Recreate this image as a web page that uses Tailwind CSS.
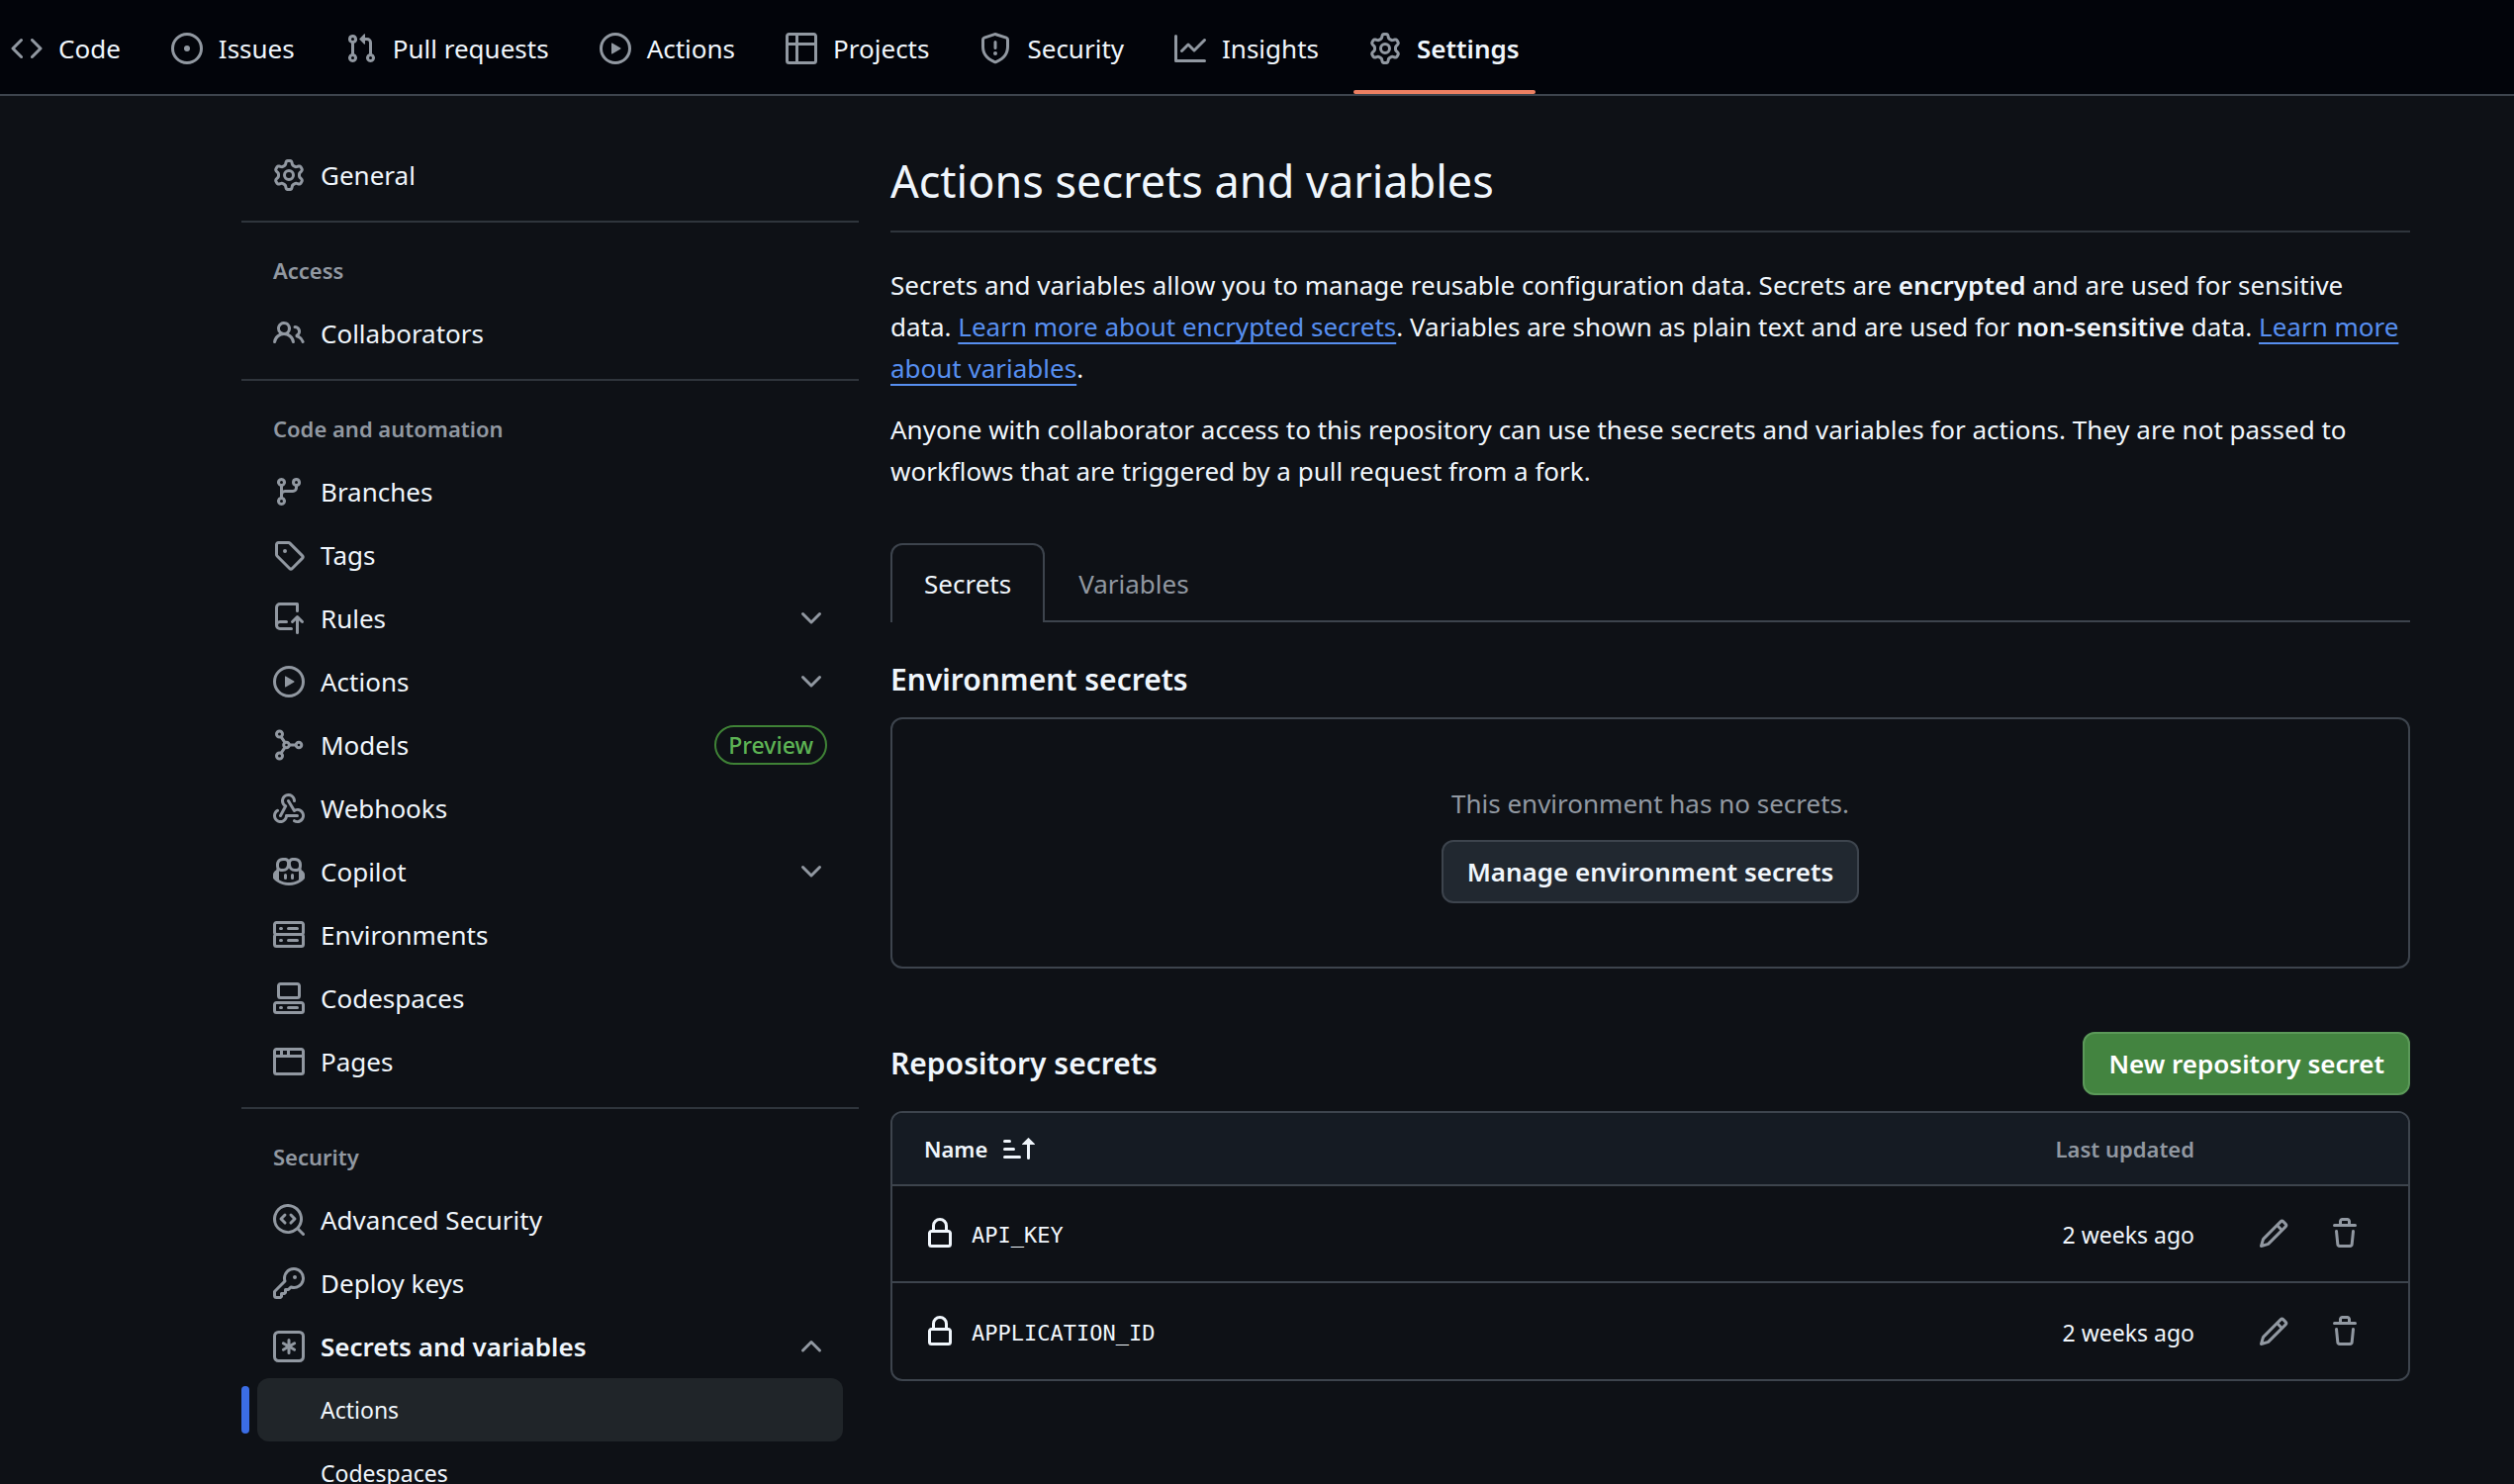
<!DOCTYPE html>
<html lang="en">
<head>
    <meta charset="UTF-8">
    <meta name="viewport" content="width=device-width, initial-scale=1.0">
    <title>Actions secrets and variables</title>
    <script src="https://cdn.jsdelivr.net/npm/@tailwindcss/browser@4"></script>
</head>
<body class="bg-[#0e1116] text-[#f0f6fc] text-[26px] leading-[42px] font-['Noto_Sans','Open_Sans',sans-serif]">
    <!-- Icon set -->
    <svg class="hidden" aria-hidden="true">
        <symbol id="code" viewBox="0 0 16 16"><path d="m11.28 3.22 4.25 4.25a.75.75 0 0 1 0 1.06l-4.25 4.25a.749.749 0 0 1-1.275-.326.749.749 0 0 1 .215-.734L13.94 8l-3.72-3.72a.749.749 0 0 1 .326-1.275.749.749 0 0 1 .734.215Zm-6.56 0a.751.751 0 0 1 1.042.018.751.751 0 0 1 .018 1.042L2.06 8l3.72 3.72a.749.749 0 0 1-.326 1.275.749.749 0 0 1-.734-.215L.47 8.53a.75.75 0 0 1 0-1.06Z"/></symbol>
        <symbol id="issue" viewBox="0 0 16 16"><path d="M8 9.5a1.5 1.5 0 1 0 0-3 1.5 1.5 0 0 0 0 3Z"/><path d="M8 0a8 8 0 1 1 0 16A8 8 0 0 1 8 0ZM1.5 8a6.5 6.5 0 1 0 13 0 6.5 6.5 0 0 0-13 0Z"/></symbol>
        <symbol id="pull" viewBox="0 0 16 16"><path d="M1.5 3.25a2.25 2.25 0 1 1 3 2.122v5.256a2.251 2.251 0 1 1-1.5 0V5.372A2.25 2.25 0 0 1 1.5 3.25Zm5.677-.177L9.573.677A.25.25 0 0 1 10 .854V2.5h1A2.5 2.5 0 0 1 13.5 5v5.628a2.251 2.251 0 1 1-1.5 0V5a1 1 0 0 0-1-1h-1v1.646a.25.25 0 0 1-.427.177L7.177 3.427a.25.25 0 0 1 0-.354ZM3.75 2.5a.75.75 0 1 0 0 1.5.75.75 0 0 0 0-1.5Zm0 9.5a.75.75 0 1 0 0 1.5.75.75 0 0 0 0-1.5Zm8.25.75a.75.75 0 1 0 1.5 0 .75.75 0 0 0-1.5 0Z"/></symbol>
        <symbol id="play" viewBox="0 0 16 16"><path d="M8 0a8 8 0 1 1 0 16A8 8 0 0 1 8 0ZM1.5 8a6.5 6.5 0 1 0 13 0 6.5 6.5 0 0 0-13 0Zm4.879-2.773 4.264 2.559a.25.25 0 0 1 0 .428l-4.264 2.559A.25.25 0 0 1 6 10.559V5.442a.25.25 0 0 1 .379-.215Z"/></symbol>
        <symbol id="project" viewBox="0 0 16 16"><path d="M0 1.75C0 .784.784 0 1.75 0h12.5C15.216 0 16 .784 16 1.75v12.5A1.75 1.75 0 0 1 14.25 16H1.75A1.75 1.75 0 0 1 0 14.25ZM6.5 6.5v8h7.75a.25.25 0 0 0 .25-.25V6.5Zm8-1.5V1.75a.25.25 0 0 0-.25-.25H6.5V5Zm-13 1.5v7.75c0 .138.112.25.25.25H5v-8ZM5 5V1.5H1.75a.25.25 0 0 0-.25.25V5Z"/></symbol>
        <symbol id="shield" viewBox="0 0 16 16"><path d="M7.467.133a1.748 1.748 0 0 1 1.066 0l5.25 1.68A1.75 1.75 0 0 1 15 3.48V7c0 1.566-.32 3.182-1.303 4.682-.983 1.498-2.585 2.813-5.032 3.855a1.697 1.697 0 0 1-1.33 0c-2.447-1.042-4.049-2.357-5.032-3.855C1.32 10.182 1 8.566 1 7V3.48a1.75 1.75 0 0 1 1.217-1.667Zm.61 1.429a.25.25 0 0 0-.153 0l-5.25 1.68a.25.25 0 0 0-.174.238V7c0 1.358.275 2.666 1.057 3.86.784 1.194 2.121 2.34 4.366 3.297a.196.196 0 0 0 .154 0c2.245-.956 3.582-2.104 4.366-3.298C13.225 9.666 13.5 8.36 13.5 7V3.48a.251.251 0 0 0-.174-.237l-5.25-1.68ZM8.75 4.75v3a.75.75 0 0 1-1.5 0v-3a.75.75 0 0 1 1.5 0ZM9 10.5a1 1 0 1 1-2 0 1 1 0 0 1 2 0Z"/></symbol>
        <symbol id="graph" viewBox="0 0 16 16"><path d="M1.5 1.75V13.5h13.75a.75.75 0 0 1 0 1.5H.75a.75.75 0 0 1-.75-.75V1.75a.75.75 0 0 1 1.5 0Zm14.28 2.53-5.25 5.25a.75.75 0 0 1-1.06 0L7 7.06 4.28 9.78a.751.751 0 0 1-1.042-.018.751.751 0 0 1-.018-1.042l3.25-3.25a.75.75 0 0 1 1.06 0L10 7.94l4.72-4.72a.751.751 0 0 1 1.042.018.751.751 0 0 1 .018 1.042Z"/></symbol>
        <symbol id="gear" viewBox="0 0 16 16"><path d="M8 0a8.2 8.2 0 0 1 .701.031C9.444.095 9.99.645 10.16 1.29l.288 1.107c.018.066.079.158.212.224.231.114.454.243.668.386.123.082.233.09.299.071l1.103-.303c.644-.176 1.392.021 1.82.63.27.385.506.792.704 1.218.315.675.111 1.422-.364 1.891l-.814.806c-.049.048-.098.147-.088.294.016.257.016.515 0 .772-.01.147.038.246.088.294l.814.806c.475.469.679 1.216.364 1.891a7.977 7.977 0 0 1-.704 1.217c-.428.61-1.176.807-1.82.63l-1.102-.302c-.067-.019-.177-.011-.3.071a5.909 5.909 0 0 1-.668.386c-.133.066-.194.158-.211.224l-.29 1.106c-.168.646-.715 1.196-1.458 1.26a8.006 8.006 0 0 1-1.402 0c-.743-.064-1.289-.614-1.458-1.26l-.289-1.106c-.018-.066-.079-.158-.212-.224a5.738 5.738 0 0 1-.668-.386c-.123-.082-.233-.09-.299-.071l-1.103.303c-.644.176-1.392-.021-1.82-.63a8.12 8.12 0 0 1-.704-1.218c-.315-.675-.111-1.422.363-1.891l.815-.806c.05-.048.098-.147.088-.294a6.214 6.214 0 0 1 0-.772c.01-.147-.038-.246-.088-.294l-.815-.806C.635 6.045.431 5.298.746 4.623a7.92 7.92 0 0 1 .704-1.217c.428-.61 1.176-.807 1.82-.63l1.102.302c.067.019.177.011.3-.071.214-.143.437-.272.668-.386.133-.066.194-.158.211-.224l.29-1.106C6.009.645 6.556.095 7.299.03 7.53.01 7.764 0 8 0Zm-.571 1.525c-.036.003-.108.036-.137.146l-.289 1.105c-.147.561-.549.967-.998 1.189-.173.086-.34.183-.5.29-.417.278-.97.423-1.529.27l-1.103-.303c-.109-.03-.175.016-.195.045-.22.312-.412.644-.573.99-.014.031-.021.11.059.19l.815.806c.411.406.562.957.53 1.456a4.709 4.709 0 0 0 0 .582c.032.499-.119 1.05-.53 1.456l-.815.806c-.081.08-.073.159-.059.19.162.346.353.677.573.989.02.03.085.076.195.046l1.102-.303c.56-.153 1.113-.008 1.53.27.161.107.328.204.501.29.447.222.85.629.997 1.189l.289 1.105c.029.109.101.143.137.146a6.6 6.6 0 0 0 1.142 0c.036-.003.108-.036.137-.146l.289-1.105c.147-.561.549-.967.998-1.189.173-.086.34-.183.5-.29.417-.278.97-.423 1.529-.27l1.103.303c.109.029.175-.016.195-.045.22-.313.411-.644.573-.99.014-.031.021-.11-.059-.19l-.815-.806c-.411-.406-.562-.957-.53-1.456a4.709 4.709 0 0 0 0-.582c-.032-.499.119-1.05.53-1.456l.815-.806c.081-.08.073-.159.059-.19a6.464 6.464 0 0 0-.573-.989c-.02-.03-.085-.076-.195-.046l-1.102.303c-.56.153-1.113.008-1.53-.27a4.44 4.44 0 0 0-.501-.29c-.447-.222-.85-.629-.997-1.189l-.289-1.105c-.029-.11-.101-.143-.137-.146a6.6 6.6 0 0 0-1.142 0ZM11 8a3 3 0 1 1-6 0 3 3 0 0 1 6 0ZM9.5 8a1.5 1.5 0 1 0-3.001.001A1.5 1.5 0 0 0 9.5 8Z"/></symbol>
        <symbol id="people" viewBox="0 0 16 16"><path d="M2 5.5a3.5 3.5 0 1 1 5.898 2.549 5.508 5.508 0 0 1 3.034 4.084.75.75 0 1 1-1.482.235 4 4 0 0 0-7.9 0 .75.75 0 0 1-1.482-.236A5.507 5.507 0 0 1 3.102 8.05 3.493 3.493 0 0 1 2 5.5ZM11 4a3.001 3.001 0 0 1 2.22 5.018 5.01 5.01 0 0 1 2.56 3.012.749.749 0 0 1-.885.954.752.752 0 0 1-.549-.514 3.507 3.507 0 0 0-2.522-2.372.75.75 0 0 1-.574-.73v-.352a.75.75 0 0 1 .416-.672A1.5 1.5 0 0 0 11 5.5.75.75 0 0 1 11 4Zm-5.5-.5a2 2 0 1 0-.001 3.999A2 2 0 0 0 5.5 3.5Z"/></symbol>
        <symbol id="branch" viewBox="0 0 16 16"><path d="M9.5 3.25a2.25 2.25 0 1 1 3 2.122V6A2.5 2.5 0 0 1 10 8.5H6a1 1 0 0 0-1 1v1.128a2.251 2.251 0 1 1-1.5 0V5.372a2.25 2.25 0 1 1 1.5 0v1.836A2.493 2.493 0 0 1 6 7h4a1 1 0 0 0 1-1v-.628A2.25 2.25 0 0 1 9.5 3.25Zm-6 0a.75.75 0 1 0 1.5 0 .75.75 0 0 0-1.5 0Zm8.25-.75a.75.75 0 1 0 0 1.5.75.75 0 0 0 0-1.5ZM4.25 12a.75.75 0 1 0 0 1.5.75.75 0 0 0 0-1.5Z"/></symbol>
        <symbol id="tag" viewBox="0 0 16 16"><path d="M1 7.775V2.75C1 1.784 1.784 1 2.75 1h5.025c.464 0 .91.184 1.238.513l6.25 6.25a1.75 1.75 0 0 1 0 2.474l-5.026 5.026a1.75 1.75 0 0 1-2.474 0l-6.25-6.25A1.752 1.752 0 0 1 1 7.775Zm1.5 0c0 .066.026.13.073.177l6.25 6.25a.25.25 0 0 0 .354 0l5.025-5.025a.25.25 0 0 0 0-.354l-6.25-6.25a.25.25 0 0 0-.177-.073H2.75a.25.25 0 0 0-.25.25ZM6 5a1 1 0 1 1 0 2 1 1 0 0 1 0-2Z"/></symbol>
        <symbol id="repo-push" viewBox="0 0 16 16"><path d="M1 2.5A2.5 2.5 0 0 1 3.5 0h8.75a.75.75 0 0 1 .75.75v3.5a.75.75 0 0 1-1.5 0V1.5h-8a1 1 0 0 0-1 1v6.708A2.493 2.493 0 0 1 3.5 9h3.25a.75.75 0 0 1 0 1.5H3.5a1 1 0 0 0 0 2h5.75a.75.75 0 0 1 0 1.5H3.5A2.5 2.5 0 0 1 1 11.5Zm13.23 7.79a.75.75 0 0 0 1.06-1.06l-2.505-2.505a.75.75 0 0 0-1.06 0L9.22 9.229a.75.75 0 0 0 1.06 1.061l1.225-1.224v6.184a.75.75 0 0 0 1.5 0V9.066Z"/></symbol>
        <symbol id="model" viewBox="0 0 16 16"><g fill="none" stroke="currentColor" stroke-width="1.5"><circle cx="3.25" cy="2.5" r="1.5"/><circle cx="6.75" cy="8" r="1.4"/><circle cx="13" cy="8" r="1.4"/><circle cx="3.25" cy="13.5" r="1.5"/><path d="M4 3.8 6 6.8M8.2 8h3.4M6 9.2l-2 3"/></g></symbol>
        <symbol id="webhook" viewBox="0 0 16 16"><path d="M5.5 4.25a2.25 2.25 0 0 1 4.5 0 .75.75 0 0 0 1.5 0 3.75 3.75 0 1 0-6.14 2.889l-2.272 4.258a.75.75 0 0 0 1.324.706L7 7.25a.75.75 0 0 0-.309-1.015A2.25 2.25 0 0 1 5.5 4.25Z"/><path d="M7.364 3.607a.75.75 0 0 1 1.03.257l2.608 4.349a3.75 3.75 0 1 1-.628 6.785.75.75 0 0 1 .752-1.299 2.25 2.25 0 1 0-.033-3.88.75.75 0 0 1-1.03-.256L7.107 4.636a.75.75 0 0 1 .257-1.03Z"/><path d="M2.9 8.776A.75.75 0 0 1 2.625 9.8 2.25 2.25 0 1 0 6 11.75a.75.75 0 0 1 .75-.751h5.5a.75.75 0 0 1 0 1.5H7.425a3.751 3.751 0 1 1-5.55-3.998.75.75 0 0 1 1.024.274Z"/></symbol>
        <symbol id="copilot" viewBox="0 0 16 16"><path d="M7.998 15.035c-4.562 0-7.873-2.914-7.998-3.749V9.338c.085-.628.677-1.686 1.588-2.065.013-.07.024-.143.036-.218.029-.183.06-.384.126-.612-.201-.508-.254-1.084-.254-1.656 0-.87.128-1.769.693-2.484.579-.733 1.494-1.124 2.724-1.261 1.206-.134 2.262.034 2.944.765.05.053.096.108.139.165.044-.057.094-.112.143-.165.682-.731 1.738-.899 2.944-.765 1.23.137 2.145.528 2.724 1.261.566.715.693 1.614.693 2.484 0 .572-.053 1.148-.254 1.656.066.228.098.429.126.612.012.076.024.148.037.218.924.385 1.522 1.471 1.591 2.095v1.872c0 .766-3.351 3.795-8.002 3.795Zm0-1.485c2.28 0 4.584-1.11 5.002-1.433V7.862l-.023-.116c-.49.21-1.075.291-1.727.291-1.146 0-2.059-.327-2.71-.991A3.222 3.222 0 0 1 8 6.303a3.24 3.24 0 0 1-.544.743c-.65.664-1.563.991-2.71.991-.652 0-1.236-.081-1.727-.291l-.023.116v4.255c.419.323 2.722 1.433 5.002 1.433ZM6.762 2.83c-.193-.206-.637-.413-1.682-.297-1.019.113-1.479.404-1.713.7-.247.312-.369.789-.369 1.554 0 .793.129 1.171.308 1.371.162.181.519.379 1.442.379.853 0 1.339-.235 1.638-.54.315-.322.527-.827.617-1.553.117-.935-.037-1.395-.241-1.614Zm4.155-.297c-1.044-.116-1.488.091-1.681.297-.204.219-.359.679-.242 1.614.091.726.303 1.231.618 1.553.299.305.784.54 1.638.54.922 0 1.28-.198 1.442-.379.179-.2.308-.578.308-1.371 0-.765-.123-1.242-.37-1.554-.233-.296-.693-.587-1.713-.7Z"/><path d="M6.25 9.037a.75.75 0 0 1 .75.75v1.501a.75.75 0 0 1-1.5 0V9.787a.75.75 0 0 1 .75-.75Zm4.25.75v1.501a.75.75 0 0 1-1.5 0V9.787a.75.75 0 0 1 1.5 0Z"/></symbol>
        <symbol id="server" viewBox="0 0 16 16"><path d="M1.75 1h12.5c.966 0 1.75.784 1.75 1.75v4c0 .372-.116.717-.314 1 .198.283.314.628.314 1v4a1.75 1.75 0 0 1-1.75 1.75H1.75A1.75 1.75 0 0 1 0 12.75v-4c0-.358.109-.707.314-1a1.739 1.739 0 0 1-.314-1v-4C0 1.784.784 1 1.75 1ZM1.5 2.75v4c0 .138.112.25.25.25h12.5a.25.25 0 0 0 .25-.25v-4a.25.25 0 0 0-.25-.25H1.75a.25.25 0 0 0-.25.25Zm.25 5.75a.25.25 0 0 0-.25.25v4c0 .138.112.25.25.25h12.5a.25.25 0 0 0 .25-.25v-4a.25.25 0 0 0-.25-.25ZM7 4.75A.75.75 0 0 1 7.75 4h4.5a.75.75 0 0 1 0 1.5h-4.5A.75.75 0 0 1 7 4.75ZM7.75 10h4.5a.75.75 0 0 1 0 1.5h-4.5a.75.75 0 0 1 0-1.5ZM3 4.75A.75.75 0 0 1 3.75 4h.5a.75.75 0 0 1 0 1.5h-.5A.75.75 0 0 1 3 4.75ZM3.75 10h.5a.75.75 0 0 1 0 1.5h-.5a.75.75 0 0 1 0-1.5Z"/></symbol>
        <symbol id="codespaces" viewBox="0 0 16 16"><path d="M0 11.25c0-.966.784-1.75 1.75-1.75h12.5c.966 0 1.75.784 1.75 1.75v3A1.75 1.75 0 0 1 14.25 16H1.75A1.75 1.75 0 0 1 0 14.25Zm2-9.5C2 .784 2.784 0 3.75 0h8.5C13.216 0 14 .784 14 1.75v5a1.75 1.75 0 0 1-1.75 1.75h-8.5A1.75 1.75 0 0 1 2 6.75Zm1.75-.25a.25.25 0 0 0-.25.25v5c0 .138.112.25.25.25h8.5a.25.25 0 0 0 .25-.25v-5a.25.25 0 0 0-.25-.25Zm-2 9.5a.25.25 0 0 0-.25.25v3c0 .138.112.25.25.25h12.5a.25.25 0 0 0 .25-.25v-3a.25.25 0 0 0-.25-.25Z"/><path d="M7 12.75a.75.75 0 0 1 .75-.75h4.5a.75.75 0 0 1 0 1.5h-4.5a.75.75 0 0 1-.75-.75Zm-4 0a.75.75 0 0 1 .75-.75h.5a.75.75 0 0 1 0 1.5h-.5a.75.75 0 0 1-.75-.75Z"/></symbol>
        <symbol id="browser" viewBox="0 0 16 16"><path d="M0 2.75C0 1.784.784 1 1.75 1h12.5c.966 0 1.75.784 1.75 1.75v10.5A1.75 1.75 0 0 1 14.25 15H1.75A1.75 1.75 0 0 1 0 13.25ZM14.5 6h-13v7.25c0 .138.112.25.25.25h12.5a.25.25 0 0 0 .25-.25Zm-6-3.5v2h6V2.75a.25.25 0 0 0-.25-.25ZM5 2.5v2h2v-2Zm-3.25 0a.25.25 0 0 0-.25.25V4.5h2v-2Z"/></symbol>
        <symbol id="codescan" viewBox="0 0 16 16"><path d="M8.47 4.97a.75.75 0 0 0 0 1.06L9.94 7.5 8.47 8.97a.75.75 0 1 0 1.06 1.06l2-2a.75.75 0 0 0 0-1.06l-2-2a.75.75 0 0 0-1.06 0ZM6.53 6.03a.75.75 0 0 0-1.06-1.06l-2 2a.75.75 0 0 0 0 1.06l2 2a.75.75 0 1 0 1.06-1.06L5.06 7.5l1.47-1.47Z"/><path d="M12.246 13.307a7.501 7.501 0 1 1 1.06-1.06l2.474 2.473a.749.749 0 1 1-1.06 1.06ZM1.5 7.5a6.002 6.002 0 0 0 3.608 5.504 6.002 6.002 0 0 0 6.486-1.117.748.748 0 0 1 .292-.293A6 6 0 1 0 1.5 7.5Z"/></symbol>
        <symbol id="key" viewBox="0 0 16 16"><path d="M10.5 0a5.499 5.499 0 1 1-1.288 10.848l-.932.932a.749.749 0 0 1-.53.22H7v.75a.749.749 0 0 1-.22.53l-.5.5a.749.749 0 0 1-.53.22H5v.75a.749.749 0 0 1-.22.53l-.5.5a.749.749 0 0 1-.53.22h-2A1.75 1.75 0 0 1 0 14.25v-2c0-.199.079-.389.22-.53l4.932-4.932A5.5 5.5 0 0 1 10.5 0Zm-4 5.5c-.001.431.069.86.205 1.269a.75.75 0 0 1-.181.768L1.5 12.56v1.69c0 .138.112.25.25.25h1.69l.06-.06v-1.19a.75.75 0 0 1 .75-.75h1.19l.06-.06v-1.19a.75.75 0 0 1 .75-.75h1.19l1.023-1.025a.75.75 0 0 1 .768-.18A4 4 0 1 0 6.5 5.5ZM11 6a1 1 0 1 1 0-2 1 1 0 0 1 0 2Z"/></symbol>
        <symbol id="asterisk" viewBox="0 0 16 16"><path d="M0 2.75A2.75 2.75 0 0 1 2.75 0h10.5A2.75 2.75 0 0 1 16 2.75v10.5A2.75 2.75 0 0 1 13.25 16H2.75A2.75 2.75 0 0 1 0 13.25ZM2.75 1.5c-.69 0-1.25.56-1.25 1.25v10.5c0 .69.56 1.25 1.25 1.25h10.5c.69 0 1.25-.56 1.25-1.25V2.75c0-.69-.56-1.25-1.25-1.25Z"/><path d="M8 4a.75.75 0 0 1 .75.75V6.7l1.69-.975a.75.75 0 0 1 .75 1.3L9.5 8l1.69.976a.75.75 0 0 1-.75 1.298L8.75 9.3v1.951a.75.75 0 0 1-1.5 0V9.299l-1.69.976a.75.75 0 0 1-.75-1.3L6.5 8l-1.69-.975a.75.75 0 0 1 .75-1.3l1.69.976V4.75A.75.75 0 0 1 8 4Z"/></symbol>
        <symbol id="chevron-down" viewBox="0 0 16 16"><path d="M12.78 5.22a.749.749 0 0 1 0 1.06l-4.25 4.25a.749.749 0 0 1-1.06 0L3.22 6.28a.749.749 0 1 1 1.06-1.06L8 8.939l3.72-3.719a.749.749 0 0 1 1.06 0Z"/></symbol>
        <symbol id="chevron-up" viewBox="0 0 16 16"><path d="M3.22 10.53a.749.749 0 0 1 0-1.06l4.25-4.25a.749.749 0 0 1 1.06 0l4.25 4.25a.749.749 0 1 1-1.06 1.06L8 6.811 4.28 10.53a.749.749 0 0 1-1.06 0Z"/></symbol>
        <symbol id="sort" viewBox="0 0 16 16"><path d="m12.927 2.573 3 3A.25.25 0 0 1 15.75 6H13.5v6.75a.75.75 0 0 1-1.5 0V6H9.75a.25.25 0 0 1-.177-.427l3-3a.25.25 0 0 1 .354 0ZM0 12.25a.75.75 0 0 1 .75-.75h7.5a.75.75 0 0 1 0 1.5H.75a.75.75 0 0 1-.75-.75Zm0-4a.75.75 0 0 1 .75-.75h4.5a.75.75 0 0 1 0 1.5H.75A.75.75 0 0 1 0 8.25Zm0-4a.75.75 0 0 1 .75-.75h2.5a.75.75 0 0 1 0 1.5H.75A.75.75 0 0 1 0 4.25Z"/></symbol>
        <symbol id="lock" viewBox="0 0 16 16"><path d="M4 4a4 4 0 0 1 8 0v2h.25c.966 0 1.75.784 1.75 1.75v5.5A1.75 1.75 0 0 1 12.25 15h-8.5A1.75 1.75 0 0 1 2 13.25v-5.5C2 6.784 2.784 6 3.75 6H4Zm8.25 3.5h-8.5a.25.25 0 0 0-.25.25v5.5c0 .138.112.25.25.25h8.5a.25.25 0 0 0 .25-.25v-5.5a.25.25 0 0 0-.25-.25ZM10.5 6V4a2.5 2.5 0 1 0-5 0v2Z"/></symbol>
        <symbol id="pencil" viewBox="0 0 16 16"><path d="M11.013 1.427a1.75 1.75 0 0 1 2.474 0l1.086 1.086a1.75 1.75 0 0 1 0 2.474l-8.61 8.61c-.21.21-.47.364-.756.445l-3.251.93a.75.75 0 0 1-.927-.928l.929-3.25c.081-.286.235-.547.445-.758l8.61-8.61Zm.176 4.823L9.75 4.81l-6.286 6.287a.253.253 0 0 0-.064.108l-.558 1.953 1.953-.558a.253.253 0 0 0 .108-.064Zm1.238-3.763a.25.25 0 0 0-.354 0L10.811 3.75l1.439 1.44 1.263-1.263a.25.25 0 0 0 0-.354Z"/></symbol>
        <symbol id="trash" viewBox="0 0 16 16"><path d="M11 1.75V3h2.25a.75.75 0 0 1 0 1.5H2.75a.75.75 0 0 1 0-1.5H5V1.75C5 .784 5.784 0 6.75 0h2.5C10.216 0 11 .784 11 1.75ZM4.496 6.675l.66 6.6a.25.25 0 0 0 .249.225h5.19a.25.25 0 0 0 .249-.225l.66-6.6a.75.75 0 0 1 1.492.149l-.66 6.6A1.748 1.748 0 0 1 10.595 15h-5.19a1.75 1.75 0 0 1-1.741-1.575l-.66-6.6a.75.75 0 1 1 1.492-.15ZM6.5 1.75V3h3V1.75a.25.25 0 0 0-.25-.25h-2.5a.25.25 0 0 0-.25.25Z"/></symbol>
    </svg>

    <!-- Repository navigation -->
    <header class="bg-[#02040a] border-b-2 border-[#3d444d]">
        <nav class="flex gap-[19px] h-[95px] -ml-[5px]" aria-label="Repository">
            <a href="#" class="flex items-center gap-4 px-4 pt-[3px]"><svg class="size-8 fill-[#9198a1]"><use href="#code"/></svg>Code</a>
            <a href="#" class="flex items-center gap-4 px-4 pt-[3px]"><svg class="size-8 fill-[#9198a1]"><use href="#issue"/></svg>Issues</a>
            <a href="#" class="flex items-center gap-4 px-4 pt-[3px]"><svg class="size-8 fill-[#9198a1]"><use href="#pull"/></svg>Pull requests</a>
            <a href="#" class="flex items-center gap-4 px-4 pt-[3px]"><svg class="size-8 fill-[#9198a1]"><use href="#play"/></svg>Actions</a>
            <a href="#" class="flex items-center gap-4 px-4 pt-[3px]"><svg class="size-8 fill-[#9198a1]"><use href="#project"/></svg>Projects</a>
            <a href="#" class="flex items-center gap-4 px-4 pt-[3px]"><svg class="size-8 fill-[#9198a1]"><use href="#shield"/></svg>Security</a>
            <a href="#" class="flex items-center gap-4 px-4 pt-[3px]"><svg class="size-8 fill-[#9198a1]"><use href="#graph"/></svg>Insights</a>
            <a href="#" class="relative flex items-center gap-4 px-4 pt-[3px] font-semibold" aria-current="page"><svg class="size-8 fill-[#9198a1]"><use href="#gear"/></svg>Settings<span class="absolute inset-x-0 bottom-0 h-1 rounded-sm bg-[#ec8062]"></span></a>
        </nav>
    </header>

    <div class="flex gap-8 pt-12 pl-[244px] pr-[105px]">
        <!-- Settings menu -->
        <aside class="w-[624px] shrink-0">
            <nav aria-label="Settings">
                <ul class="px-4">
                    <li><a href="#" class="flex items-center gap-4 h-16 px-4"><svg class="size-8 fill-[#9198a1]"><use href="#gear"/></svg>General</a></li>
                </ul>
                <hr class="mt-3.5 mb-4 border-t-2 border-[#2f353c]">

                <h2 class="flex items-center h-16 px-8 text-[22px] font-semibold text-[#9198a1]">Access</h2>
                <ul class="px-4">
                    <li><a href="#" class="flex items-center gap-4 h-16 px-4"><svg class="size-8 fill-[#9198a1]"><use href="#people"/></svg>Collaborators</a></li>
                </ul>
                <hr class="mt-3.5 mb-4 border-t-2 border-[#2f353c]">

                <h2 class="flex items-center h-16 px-8 text-[22px] font-semibold text-[#9198a1]">Code and automation</h2>
                <ul class="px-4">
                    <li><a href="#" class="flex items-center gap-4 h-16 px-4"><svg class="size-8 fill-[#9198a1]"><use href="#branch"/></svg>Branches</a></li>
                    <li><a href="#" class="flex items-center gap-4 h-16 px-4"><svg class="size-8 fill-[#9198a1]"><use href="#tag"/></svg>Tags</a></li>
                    <li><button type="button" class="flex items-center gap-4 w-full h-16 px-4"><svg class="size-8 fill-[#9198a1]"><use href="#repo-push"/></svg>Rules<svg class="size-8 ml-auto fill-[#9198a1]"><use href="#chevron-down"/></svg></button></li>
                    <li><button type="button" class="flex items-center gap-4 w-full h-16 px-4"><svg class="size-8 fill-[#9198a1]"><use href="#play"/></svg>Actions<svg class="size-8 ml-auto fill-[#9198a1]"><use href="#chevron-down"/></svg></button></li>
                    <li><a href="#" class="flex items-center gap-4 h-16 px-4"><svg class="size-8 text-[#9198a1]"><use href="#model"/></svg>Models<span class="flex items-center h-10 ml-auto px-3 rounded-full border-2 border-[#3f8236] text-[23px] font-medium text-[#5db354]">Preview</span></a></li>
                    <li><a href="#" class="flex items-center gap-4 h-16 px-4"><svg class="size-8 fill-[#9198a1]"><use href="#webhook"/></svg>Webhooks</a></li>
                    <li><button type="button" class="flex items-center gap-4 w-full h-16 px-4"><svg class="size-8 fill-[#9198a1]"><use href="#copilot"/></svg>Copilot<svg class="size-8 ml-auto fill-[#9198a1]"><use href="#chevron-down"/></svg></button></li>
                    <li><a href="#" class="flex items-center gap-4 h-16 px-4"><svg class="size-8 fill-[#9198a1]"><use href="#server"/></svg>Environments</a></li>
                    <li><a href="#" class="flex items-center gap-4 h-16 px-4"><svg class="size-8 fill-[#9198a1]"><use href="#codespaces"/></svg>Codespaces</a></li>
                    <li><a href="#" class="flex items-center gap-4 h-16 px-4"><svg class="size-8 fill-[#9198a1]"><use href="#browser"/></svg>Pages</a></li>
                </ul>
                <hr class="mt-3.5 mb-4 border-t-2 border-[#2f353c]">

                <h2 class="flex items-center h-16 px-8 text-[22px] font-semibold text-[#9198a1]">Security</h2>
                <ul class="px-4">
                    <li><a href="#" class="flex items-center gap-4 h-16 px-4"><svg class="size-8 fill-[#9198a1]"><use href="#codescan"/></svg>Advanced Security</a></li>
                    <li><a href="#" class="flex items-center gap-4 h-16 px-4"><svg class="size-8 fill-[#9198a1]"><use href="#key"/></svg>Deploy keys</a></li>
                    <li>
                        <button type="button" class="flex items-center gap-4 w-full h-16 px-4 font-semibold" aria-expanded="true"><svg class="size-8 fill-[#9198a1]"><use href="#asterisk"/></svg>Secrets and variables<svg class="size-8 ml-auto fill-[#9198a1]"><use href="#chevron-up"/></svg></button>
                        <ul class="text-[23px]">
                            <li class="relative"><span class="absolute -left-4 top-2 w-2 h-12 rounded-full bg-[#3b6de5]"></span><a href="#" class="flex items-center h-16 pl-16 rounded-xl bg-[#202529]" aria-current="page">Actions</a></li>
                            <li><a href="#" class="flex items-center h-16 pl-16">Codespaces</a></li>
                        </ul>
                    </li>
                </ul>
            </nav>
        </aside>

        <main class="flex-1 min-w-0">
            <h1 class="pt-0.5 pb-3.5 border-b-2 border-[#2f353c] text-[45px] leading-[72px]">Actions secrets and variables</h1>
            <p class="mt-8">Secrets and variables allow you to manage reusable configuration data. Secrets are <strong class="font-semibold">encrypted</strong> and are used for sensitive data. <a href="#" class="text-[#578ff0] underline decoration-2 underline-offset-[6px]">Learn more about encrypted secrets</a>. Variables are shown as plain text and are used for <strong class="font-semibold">non-sensitive</strong> data. <a href="#" class="text-[#578ff0] underline decoration-2 underline-offset-[6px]">Learn more about variables</a>.</p>
            <p class="mt-5">Anyone with collaborator access to this repository can use these secrets and variables for actions. They are not passed to workflows that are triggered by a pull request from a fork.</p>

            <!-- Tabs -->
            <div class="flex mt-[52px] border-b-2 border-[#3d444d]" role="tablist">
                <button type="button" role="tab" aria-selected="true" class="h-20 px-8 -mb-0.5 border-2 border-b-0 border-[#3d444d] rounded-t-xl bg-[#0e1116]">Secrets</button>
                <button type="button" role="tab" aria-selected="false" class="h-20 -mb-0.5 px-[34px] pt-0.5 text-[#9198a1]">Variables</button>
            </div>

            <section class="mt-[34px]">
                <h2 class="text-[30px] leading-[48px] font-semibold">Environment secrets</h2>
                <div class="flex flex-col items-center mt-[14px] py-16 border-2 border-[#3d444d] rounded-xl">
                    <p class="text-[#9198a1]">This environment has no secrets.</p>
                    <button type="button" class="h-16 mt-4 px-6 border-2 border-[#3d444d] rounded-xl bg-[#212830] font-semibold">Manage environment secrets</button>
                </div>
            </section>

            <section class="mt-16">
                <div class="flex items-center justify-between">
                    <h2 class="text-[30px] leading-[48px] font-semibold">Repository secrets</h2>
                    <button type="button" class="h-16 px-6 border-2 border-[#5b9959] rounded-xl bg-[#438440] text-white font-semibold">New repository secret</button>
                </div>
                <div class="mt-4 border-2 border-[#3d444d] rounded-xl overflow-hidden">
                    <table class="w-full text-[22px]">
                        <thead class="bg-[#151b23]">
                            <tr class="h-[73px]">
                                <th class="pl-8 text-left font-semibold"><button type="button" class="flex items-center gap-4">Name<svg class="size-8 fill-[#f0f6fc]"><use href="#sort"/></svg></button></th>
                                <th class="w-[300px] text-right font-semibold text-[#9198a1]">Last updated</th>
                                <th class="w-[216px]"><span class="sr-only">Manage</span></th>
                            </tr>
                        </thead>
                        <tbody>
                            <tr class="h-[98px] border-t-2 border-[#3d444d]">
                                <td class="pl-8"><div class="flex items-center gap-4 font-['DejaVu_Sans_Mono',monospace]"><svg class="size-8 fill-[#f0f6fc]"><use href="#lock"/></svg><span class="pt-1">API_KEY</span></div></td>
                                <td class="pt-0.5 text-right text-[23px]">2 weeks ago</td>
                                <td><div class="flex justify-end gap-10 pr-12"><button type="button" aria-label="Edit API_KEY"><svg class="size-8 fill-[#9198a1]"><use href="#pencil"/></svg></button><button type="button" aria-label="Delete API_KEY"><svg class="size-8 fill-[#9198a1]"><use href="#trash"/></svg></button></div></td>
                            </tr>
                            <tr class="h-[98px] border-t-2 border-[#3d444d]">
                                <td class="pl-8"><div class="flex items-center gap-4 font-['DejaVu_Sans_Mono',monospace]"><svg class="size-8 fill-[#f0f6fc]"><use href="#lock"/></svg><span class="pt-1">APPLICATION_ID</span></div></td>
                                <td class="pt-0.5 text-right text-[23px]">2 weeks ago</td>
                                <td><div class="flex justify-end gap-10 pr-12"><button type="button" aria-label="Edit APPLICATION_ID"><svg class="size-8 fill-[#9198a1]"><use href="#pencil"/></svg></button><button type="button" aria-label="Delete APPLICATION_ID"><svg class="size-8 fill-[#9198a1]"><use href="#trash"/></svg></button></div></td>
                            </tr>
                        </tbody>
                    </table>
                </div>
            </section>
        </main>
    </div>
</body>
</html>
